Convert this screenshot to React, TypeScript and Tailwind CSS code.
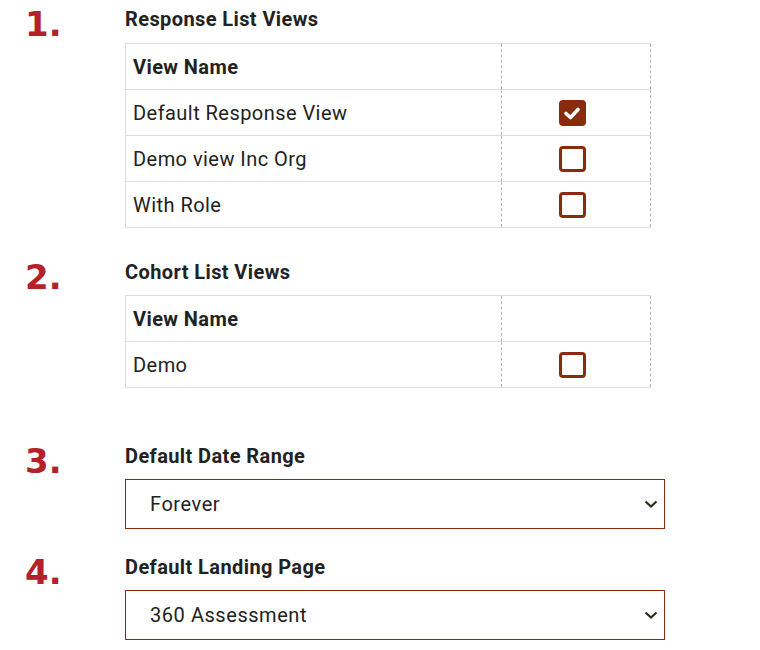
import React from "react";

const Num = ({ n }: { n: string }) => (
  <div className="w-[100px] shrink-0 text-[34px] leading-[34px] font-bold text-[#b22228]" style={{ fontFamily: '"DejaVu Sans", sans-serif' }}>
    {n}
  </div>
);

const Check = ({ checked }: { checked?: boolean }) => (
  <div
    className={
      "w-[27px] h-[26px] rounded-[4px] border-[3px] border-[#8a2b0d] flex items-center justify-center mr-[8px] " +
      (checked ? "bg-[#8a2b0d]" : "bg-white")
    }
  >
    {checked && (
      <svg width="18" height="16" viewBox="0 0 18 16">
        <polyline points="3,8.5 7.5,12.5 15,4.5" fill="none" stroke="white" strokeWidth="3.6" strokeLinecap="round" strokeLinejoin="round" />
      </svg>
    )}
  </div>
);

const Table = ({ rows }: { rows: { name: string; checked?: boolean }[] }) => (
  <div className="w-[526px] border-l border-t border-[#dcd9f1]">
    <div className="flex h-[46px] border-b border-[#dcd9f1]">
      <div className="w-[375px] pl-[7px] flex items-center font-bold text-[20px] tracking-[0.4px] text-[#222]">View Name</div>
      <div className="flex-1 border-l border-r border-dashed border-l-[#b4b0cc] border-r-[#b4b0cc]" />
    </div>
    {rows.map((r) => (
      <div key={r.name} className="flex h-[46px] border-b border-[#dcd9f1]">
        <div className="w-[375px] pl-[7px] flex items-center text-[20px] tracking-[0.45px] text-[#222]">{r.name}</div>
        <div className="flex-1 border-l border-r border-dashed border-l-[#b4b0cc] border-r-[#b4b0cc] flex items-center justify-center">
          <Check checked={r.checked} />
        </div>
      </div>
    ))}
  </div>
);

const Select = ({ value }: { value: string }) => (
  <div className="w-[540px] h-[50px] border border-[#8a2b0d] flex items-center justify-between pl-[24px] pr-[6px] text-[20px] tracking-[0.55px] text-[#222]">
    <span>{value}</span>
    <svg width="14" height="8" viewBox="0 0 14 8">
      <polyline points="1.5,1.5 7,6.5 12.5,1.5" fill="none" stroke="#2d2d1e" strokeWidth="2.2" />
    </svg>
  </div>
);

const Heading = ({ children }: { children: React.ReactNode }) => (
  <div className="text-[20px] leading-[24px] font-bold tracking-[0.4px] text-[#222]">{children}</div>
);

export default function App() {
  return (
    <div className="w-[760px] h-[650px] bg-white pl-[25px] pt-[7px]" style={{ fontFamily: 'Roboto, sans-serif' }}>
      <div className="flex">
        <Num n="1." />
        <div>
          <Heading>Response List Views</Heading>
          <div className="mt-[12px]">
            <Table rows={[{ name: "Default Response View", checked: true }, { name: "Demo view Inc Org" }, { name: "With Role" }]} />
          </div>
        </div>
      </div>
      <div className="flex mt-[32px]">
        <Num n="2." />
        <div>
          <Heading>Cohort List Views</Heading>
          <div className="mt-[11px]">
            <Table rows={[{ name: "Demo" }]} />
          </div>
        </div>
      </div>
      <div className="flex mt-[56px]">
        <Num n="3." />
        <div>
          <Heading>Default Date Range</Heading>
          <div className="mt-[11px]">
            <Select value="Forever" />
          </div>
        </div>
      </div>
      <div className="flex mt-[26px]">
        <Num n="4." />
        <div>
          <Heading>Default Landing Page</Heading>
          <div className="mt-[11px]">
            <Select value="360 Assessment" />
          </div>
        </div>
      </div>
    </div>
  );
}
